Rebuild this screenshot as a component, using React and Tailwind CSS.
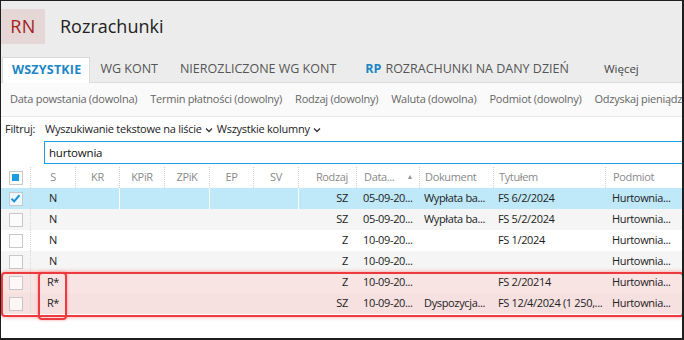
import React from "react";

const cols = "grid-cols-[29px_45px_44px_45px_45px_44px_45px_58px_63px_74px_112px_1fr]";

function Box({ state }) {
  return (
    <div className="w-[14px] h-[14px] border border-[#c8c8c8] bg-white/70 flex items-center justify-center">
      {state === "check" && (
        <svg width="11" height="11" viewBox="0 0 11 11">
          <path d="M1.5 5.8 L4.2 8.4 L9.5 2.2" fill="none" stroke="#1a8fd6" strokeWidth="2" />
        </svg>
      )}
      {state === "partial" && <div className="w-[7px] h-[7px] bg-[#1a9ee0]" />}
    </div>
  );
}

const rows = [
  { chk: "check", s: "N", r: "SZ", d: "05-09-20...", dok: "Wypłata ba...", t: "FS 6/2/2024", p: "Hurtownia...", bg: "bg-[#bfe8f8]", sel: true },
  { chk: "", s: "N", r: "SZ", d: "05-09-20...", dok: "Wypłata ba...", t: "FS 5/2/2024", p: "Hurtownia...", bg: "bg-[#f5f5f5]" },
  { chk: "", s: "N", r: "Z", d: "10-09-20...", dok: "", t: "FS 1/2024", p: "Hurtownia...", bg: "bg-white" },
  { chk: "", s: "N", r: "Z", d: "10-09-20...", dok: "", t: "", p: "Hurtownia...", bg: "bg-[#f5f5f5]" },
  { chk: "", s: "R*", r: "Z", d: "10-09-20...", dok: "", t: "FS 2/20214", p: "Hurtownia...", bg: "bg-[#f9e4e4]" },
  { chk: "", s: "R*", r: "SZ", d: "10-09-20...", dok: "Dyspozycja...", t: "FS 12/4/2024 (1 250,...", p: "Hurtownia...", bg: "bg-[#f6e0e0]" },
];

function Chevron() {
  return (
    <svg width="8" height="6" viewBox="0 0 8 6" className="ml-[3px] mt-[2px]">
      <path d="M1 1.5 L4 4.5 L7 1.5" fill="none" stroke="#333" strokeWidth="1.3" />
    </svg>
  );
}

export default function App() {
  const sep = "border-l border-dotted border-[#d0d0d0]";
  const sepW = (on) => (on ? "border-l border-white" : "border-l border-transparent");
  return (
    <div className="w-[684px] h-[340px] overflow-hidden bg-white border-t border-l border-r-2 border-b-2 border-[#1e1e1e] flex flex-col font-['Open_Sans',sans-serif] text-[#222]">
      {/* header */}
      <div className="h-[49px] shrink-0 bg-[#ececec] flex items-center pt-[1px]">
        <div className="w-[44px] h-[35px] bg-[#e5d7d6] text-[#a11f1e] text-[18px] flex items-center justify-center tracking-[0.5px]">
          RN
        </div>
        <div className="ml-[15px] text-[18px] text-[#222]">Rozrachunki</div>
      </div>
      {/* tabs */}
      <div className="h-[33px] shrink-0 bg-[#ececec] flex items-end border-b border-[#dadada] text-[12.5px] text-[#555] uppercase">
        <div className="h-[26px] ml-[1px] pl-[9px] pr-[8px] bg-white border-l border-t border-r border-[#dadada] -mb-px flex items-center font-bold text-[#1a86c6] tracking-[0.2px]">
          Wszystkie
        </div>
        <div className="h-[26px] px-[10px] flex items-center">WG KONT</div>
        <div className="h-[26px] px-[12px] flex items-center">NIEROZLICZONE WG KONT</div>
        <div className="h-[26px] pl-[17px] pr-[10px] flex items-center">
          <span className="font-bold text-[#1a86c6] mr-[4px]">RP</span>ROZRACHUNKI NA DANY DZIEŃ
        </div>
        <div className="h-[26px] pl-[25px] flex items-center normal-case text-[11.5px] text-[#444]">Więcej</div>
      </div>
      {/* filters */}
      <div className="h-[34px] shrink-0 bg-[#fafafa] border-b border-[#e8e8e8] flex items-center gap-[13px] pl-[9px] text-[11px] tracking-[-0.25px] text-[#666] whitespace-nowrap">
        <span>Data powstania (dowolna)</span>
        <span>Termin płatności (dowolny)</span>
        <span>Rodzaj (dowolny)</span>
        <span>Waluta (dowolna)</span>
        <span>Podmiot (dowolny)</span>
        <span>Odzyskaj pieniądze</span>
      </div>
      {/* filtruj */}
      <div className="h-[24px] shrink-0 flex items-center pl-[4px] text-[11px] tracking-[-0.25px] text-[#222] whitespace-nowrap">
        <span className="w-[40px]">Filtruj:</span>
        <span className="flex items-center">Wyszukiwanie tekstowe na liście<Chevron /></span>
        <span className="flex items-center ml-[4px]">Wszystkie kolumny<Chevron /></span>
      </div>
      {/* input */}
      <div className="h-[23px] shrink-0 ml-[43px] -mr-[4px] border border-[#1ba0e0] flex items-center pl-[4px] text-[11.5px] tracking-[-0.2px] text-[#111]">
        hurtownia
      </div>
      {/* table */}
      <div className="mt-[3px] text-[11px] tracking-[-0.35px] relative">
        <div className={`grid ${cols} h-[21px] items-center text-[#8a8a8a]`}>
          <div className="flex justify-center pl-[0px]"><Box state="partial" /></div>
          <div className={`text-center ${sep} h-full flex items-center justify-center`}>S</div>
          <div className={`${sep} h-full flex items-center justify-center`}>KR</div>
          <div className={`${sep} h-full flex items-center justify-center`}>KPiR</div>
          <div className={`${sep} h-full flex items-center justify-center`}>ZPiK</div>
          <div className={`${sep} h-full flex items-center justify-center`}>EP</div>
          <div className={`${sep} h-full flex items-center justify-center`}>SV</div>
          <div className={`${sep} h-full flex items-center justify-end pr-[8px]`}>Rodzaj</div>
          <div className={`${sep} h-full flex items-center pl-[7px] justify-between pr-[6px]`}>
            <span>Data...</span>
            <span className="text-[7px] text-[#999]">▲</span>
          </div>
          <div className={`${sep} h-full flex items-center pl-[5px]`}>Dokument</div>
          <div className={`${sep} h-full flex items-center pl-[5px]`}>Tytułem</div>
          <div className={`${sep} h-full flex items-center pl-[7px]`}>Podmiot</div>
        </div>
        {rows.map((r, i) => (
          <div key={i} className={`grid ${cols} h-[21px] items-center whitespace-nowrap overflow-hidden ${r.bg}`}>
            <div className="flex justify-center"><Box state={r.chk} /></div>
            <div className="h-full flex items-center justify-center border-l border-dotted border-[#d8d8d8]">{r.s}</div>
            <div className="h-full" />
            <div className={`h-full ${sepW(r.sel)}`} />
            <div className="h-full" />
            <div className={`h-full ${sepW(r.sel)}`} />
            <div className="h-full" />
            <div className={`h-full flex items-center justify-end pr-[8px] ${sepW(r.sel)}`}>{r.r}</div>
            <div className="h-full flex items-center pl-[7px]">{r.d}</div>
            <div className="h-full flex items-center pl-[5px]">{r.dok}</div>
            <div className="h-full flex items-center pl-[5px] overflow-hidden">{r.t}</div>
            <div className="h-full flex items-center pl-[7px]">{r.p}</div>
          </div>
        ))}
        {/* highlight frames */}
        <div className="absolute left-0 right-[-2px] top-[105px] h-[45px] rounded-[4px] border-2 border-[#ec3a3f] shadow-[0_0_4px_rgba(240,50,50,0.45)] pointer-events-none" />
        <div className="absolute left-[37px] w-[29px] top-[105px] h-[48px] rounded-[4px] border-2 border-[#ec3a3f] shadow-[0_0_3px_rgba(240,50,50,0.45)] pointer-events-none" />
      </div>
    </div>
  );
}
